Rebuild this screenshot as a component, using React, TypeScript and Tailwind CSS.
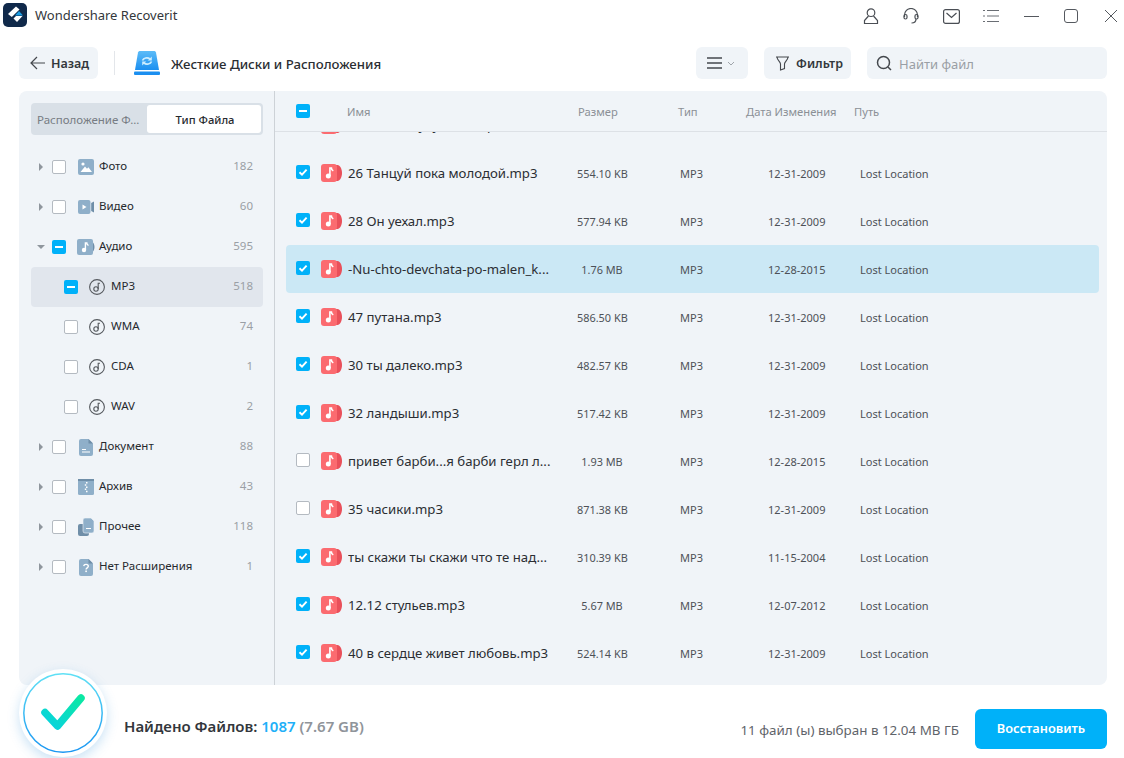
import { ReactNode } from "react";

const files = [
  { name: "25 Я не забуду тебя.mp3", size: "498.20 KB", date: "12-31-2009", on: true },
  { name: "26 Танцуй пока молодой.mp3", size: "554.10 KB", date: "12-31-2009", on: true },
  { name: "28 Он уехал.mp3", size: "577.94 KB", date: "12-31-2009", on: true },
  { name: "-Nu-chto-devchata-po-malen_k...", size: "1.76 MB", date: "12-28-2015", on: true, active: true },
  { name: "47 путана.mp3", size: "586.50 KB", date: "12-31-2009", on: true },
  { name: "30 ты далеко.mp3", size: "482.57 KB", date: "12-31-2009", on: true },
  { name: "32 ландыши.mp3", size: "517.42 KB", date: "12-31-2009", on: true },
  { name: "привет барби...я барби герл л...", size: "1.93 MB", date: "12-28-2015", on: false },
  { name: "35 часики.mp3", size: "871.38 KB", date: "12-31-2009", on: false },
  { name: "ты скажи ты скажи что те над...", size: "310.39 KB", date: "11-15-2004", on: true },
  { name: "12.12 стульев.mp3", size: "5.67 MB", date: "12-07-2012", on: true },
  { name: "40 в сердце живет любовь.mp3", size: "524.14 KB", date: "12-31-2009", on: true },
];

function Check({ state }: { state: "off" | "on" | "mixed" }) {
  if (state === "off") {
    return <div className="w-[14px] h-[14px] shrink-0 rounded-[2px] border border-[#b4bac1] bg-white" />;
  }
  return (
    <div className="w-[14px] h-[14px] shrink-0 rounded-[2px] bg-[#00b1f9] flex items-center justify-center">
      {state === "mixed" ? (
        <div className="w-[8px] h-[2px] bg-white" />
      ) : (
        <svg width="10" height="10" viewBox="0 0 10 10" fill="none">
          <path d="M1.500 5.200 4 7.600 8.600 2.600" stroke="white" strokeWidth="1.900" />
        </svg>
      )}
    </div>
  );
}

function FileNote() {
  return (
    <svg width="21" height="18" viewBox="0 0 21 18" className="shrink-0">
      <path d="M14 1h2.500c2.500 0 4.500 4 4.500 8s-2 8-4.500 8H14z" fill="#e9505a" />
      <rect width="16" height="18" rx="3" fill="#fb6b70" />
      <circle cx="7.300" cy="12" r="2.500" fill="white" />
      <path d="M8.900 12V4h1.500c0 1.700.9 2.400 1.900 2.900" fill="none" stroke="white" strokeWidth="1.600" />
    </svg>
  );
}

function Caret({ open }: { open?: boolean }) {
  return open ? (
    <div className="w-0 h-0 border-x-[4px] border-x-transparent border-t-[4px] border-t-[#8f969d]" />
  ) : (
    <div className="w-0 h-0 ml-[2px] border-y-[4px] border-y-transparent border-l-[4px] border-l-[#8f969d]" />
  );
}

function NoteCircle() {
  return (
    <svg width="16" height="16" viewBox="0 0 16 16" fill="none" stroke="#55595e" strokeWidth="1.100" className="shrink-0">
      <circle cx="8" cy="8" r="7.400" />
      <circle cx="7" cy="10" r="2.200" />
      <path d="M9.200 10V4.200h1.800" />
    </svg>
  );
}

const kindIcons: Record<string, ReactNode> = {
  photo: (
    <svg width="16" height="16" viewBox="0 0 16 16">
      <rect width="16" height="16" rx="2" fill="#8fafc9" />
      <circle cx="5" cy="5" r="1.600" fill="white" />
      <path d="M2.500 13 7 7.500l2 2.200 1.400-1.400L14 13z" fill="white" />
    </svg>
  ),
  video: (
    <svg width="16" height="14" viewBox="0 0 16 14">
      <rect width="12.500" height="14" rx="2" fill="#8fafc9" />
      <path d="M13.200 3 16 1.500v11L13.200 11z" fill="#6f8ea8" />
      <path d="M4.500 4.500 8.500 7l-4 2.500z" fill="white" />
    </svg>
  ),
  audio: (
    <svg width="18" height="16" viewBox="0 0 18 16">
      <path d="M14 1.500c2.200 1.500 3.500 3.800 3.500 6.500s-1.300 5-3.500 6.500z" fill="#6f8ea8" />
      <rect width="16" height="16" rx="2" fill="#8fafc9" />
      <circle cx="7" cy="11" r="2.200" fill="white" />
      <path d="M8.400 11V4h1.400c0 1.400.8 2 1.700 2.500" fill="none" stroke="white" strokeWidth="1.400" />
    </svg>
  ),
  doc: (
    <svg width="14" height="17" viewBox="0 0 14 17">
      <path d="M2 0h7.500L14 4.500V15a2 2 0 0 1-2 2H2a2 2 0 0 1-2-2V2a2 2 0 0 1 2-2z" fill="#8fafc9" />
      <path d="M9.500 0 14 4.500H9.500z" fill="#6f8ea8" />
      <path d="M3 10h4v1H3zM3 12.500h8v1H3z" fill="white" />
    </svg>
  ),
  zip: (
    <svg width="16" height="16" viewBox="0 0 16 16">
      <rect width="16" height="16" rx="1.500" fill="#8fafc9" />
      <rect width="16" height="2" fill="#6f8ea8" />
      <path d="M8 3h1.500v1.500H8zM6.800 5.200h1.500v1.500H6.800zM8 7.400h1.500v1.500H8zM6.800 9.600h1.500v1.500H6.800zM8 11.800h1.500v1.500H8z" fill="white" />
    </svg>
  ),
  other: (
    <svg width="16" height="18" viewBox="0 0 16 18">
      <rect x="0" y="6" width="11" height="12" rx="2" fill="#6f8ea8" />
      <path d="M7 0h6l3 3v10a2 2 0 0 1-2 2H7a2 2 0 0 1-2-2V2a2 2 0 0 1 2-2z" fill="#8fafc9" stroke="#f0f4f8" strokeWidth="0.600" />
      <path d="M8 10h5v1H8z" fill="white" />
    </svg>
  ),
  unknown: (
    <svg width="14" height="17" viewBox="0 0 14 17">
      <path d="M2 0h7.500L14 4.500V15a2 2 0 0 1-2 2H2a2 2 0 0 1-2-2V2a2 2 0 0 1 2-2z" fill="#8fafc9" />
      <path d="M9.500 0 14 4.500H9.500z" fill="#6f8ea8" />
      <path d="M4.700 7.200C4.900 5.900 5.800 5.400 7 5.400c1.300 0 2.300.7 2.300 1.900 0 1.600-2.200 1.600-2.200 3.200" fill="none" stroke="white" strokeWidth="1.400" />
      <rect x="6.300" y="11.500" width="1.600" height="1.600" fill="white" />
    </svg>
  ),
};

function KindRow({ icon, label, count, open, state = "off" }: { icon: string; label: string; count: number; open?: boolean; state?: "off" | "on" | "mixed" }) {
  return (
    <div className="h-[40px] flex items-center pr-[10px]">
      <div className="w-[21px] pl-[6px]">
        <Caret open={open} />
      </div>
      <Check state={state} />
      <div className="w-[18px] ml-[11px] flex justify-center shrink-0">{kindIcons[icon]}</div>
      <span className="ml-[4px] mb-[2px] text-[11.500px] text-[#26292e]">{label}</span>
      <span className="ml-auto mb-[2px] text-[11.500px] text-[#9a9fa5]">{count}</span>
    </div>
  );
}

function SubRow({ label, count, state = "off", active }: { label: string; count: number; state?: "off" | "on" | "mixed"; active?: boolean }) {
  return (
    <div className={"h-[40px] flex items-center pl-[33px] pr-[10px] rounded-[4px] " + (active ? "bg-[#e1e6ed]" : "")}>
      <Check state={state} />
      <div className="ml-[11px]">
        <NoteCircle />
      </div>
      <span className="ml-[6px] mb-[2px] text-[11.500px] text-[#26292e]">{label}</span>
      <span className="ml-auto mb-[2px] text-[11.500px] text-[#9a9fa5]">{count}</span>
    </div>
  );
}

function FileRow({ file }: { file: (typeof files)[number] }) {
  return (
    <div className={"h-[48px] shrink-0 ml-[11px] w-[813px] flex items-center pl-[10px] rounded-[4px] " + (file.active ? "bg-[#cbe8f5]" : "")}>
      <div className="mb-[2px]">
        <Check state={file.on ? "on" : "off"} />
      </div>
      <div className="ml-[11px] mr-[6px]">
        <FileNote />
      </div>
      <span className="w-[229px] shrink-0 mt-[2px] text-[13.200px] text-[#2b2e33] whitespace-nowrap overflow-hidden">{file.name}</span>
      <div className="w-[103px] shrink-0 mt-[2px]">
        <div className="w-[50px] text-center text-[10.900px] text-[#4d5157] whitespace-nowrap">{file.size}</div>
      </div>
      <span className="w-[88px] shrink-0 mt-[2px] text-[11px] text-[#4d5157]">MP3</span>
      <span className="w-[92px] shrink-0 mt-[2px] text-[11px] text-[#4d5157]">{file.date}</span>
      <span className="mt-[2px] text-[11px] text-[#4d5157]">Lost Location</span>
    </div>
  );
}

const topIcon = "w-[40px] h-[32px] flex items-center justify-center shrink-0";

export default function App() {
  return (
    <div className="relative w-[1124px] h-[758px] overflow-hidden bg-white flex flex-col font-['Noto_Sans',sans-serif]">
      {/* title bar */}
      <div className="h-[32px] flex items-center shrink-0 -mt-[1px]">
        <svg width="24" height="24" viewBox="0 0 24 24" className="ml-[3px] shrink-0">
          <rect width="24" height="24" rx="5" fill="#10294a" />
          <path d="M13 3.500 16.500 6.500 8.800 14 5 11z" fill="white" />
          <path d="M10.500 15.500 13 13l6.500 0-5.500 6z" fill="white" />
          <path d="M16 8 20 12.500H12z" fill="#1a9de3" />
        </svg>
        <span className="ml-[8px] mt-[2px] text-[13px] text-[#33373c]">Wondershare Recoverit</span>
        <div className="ml-auto flex -mr-[7px] mt-[2px]">
          <div className={topIcon}>
            <svg width="16" height="16" viewBox="0 0 16 16" fill="none" stroke="#4a4e54" strokeWidth="1.200">
              <circle cx="8" cy="4.700" r="3.800" />
              <path d="M5.500 8 1.500 12.500V15.500h13V12.500L10.500 8" />
            </svg>
          </div>
          <div className={topIcon}>
            <svg width="16" height="16" viewBox="0 0 16 16" fill="none" stroke="#4a4e54" strokeWidth="1.200">
              <path d="M1.500 9V7a6.500 6.500 0 0 1 13 0v2" />
              <rect x="1" y="6.500" width="3" height="4.500" rx="1.500" />
              <rect x="12" y="6.500" width="3" height="4.500" rx="1.500" />
              <path d="M13 11c0 2.500-2 4-4.500 4" />
            </svg>
          </div>
          <div className={topIcon}>
            <svg width="17" height="15" viewBox="0 0 17 15" fill="none" stroke="#4a4e54" strokeWidth="1.200">
              <rect x="0.600" y="0.600" width="15.800" height="13.800" rx="2" />
              <path d="M3.500 4 8.500 8.500 13.500 4" />
            </svg>
          </div>
          <div className={topIcon}>
            <svg width="16" height="14" viewBox="0 0 16 14" stroke="#6a6e74" strokeWidth="1">
              <path d="M0 1.500h2M4 1.500h12M0 7h2M4 7h12M0 12.500h2M4 12.500h12" />
            </svg>
          </div>
          <div className={topIcon}>
            <div className="w-[15px] h-[1px] bg-[#55595f]" />
          </div>
          <div className={topIcon}>
            <div className="w-[14px] h-[14px] rounded-[3px] border border-[#55595f]" />
          </div>
          <div className={topIcon}>
            <svg width="14" height="14" viewBox="0 0 14 14" stroke="#55595f" strokeWidth="1">
              <path d="M1 1l12 12M13 1 1 13" />
            </svg>
          </div>
        </div>
      </div>

      {/* toolbar */}
      <div className="h-[32px] mt-[16px] mx-[19px] w-[1088px] flex items-center shrink-0">
        <div className="w-[79px] h-[32px] rounded-[6px] bg-[#f0f4f8] flex items-center pl-[11px]">
          <svg width="15" height="14" viewBox="0 0 15 14" fill="none" stroke="#44484d" strokeWidth="1.200">
            <path d="M15 7H1M7 1 1 7l6 6" />
          </svg>
          <span className="ml-[6px] mt-[3px] text-[12.500px] font-semibold text-[#33373c]">Назад</span>
        </div>
        <div className="w-px h-[24px] bg-[#e3e6ea] ml-[16px]" />
        <svg width="26" height="25" viewBox="0 0 26 25" className="ml-[19px] shrink-0">
          <defs>
            <linearGradient id="disk" x1="0" y1="0" x2="0" y2="1">
              <stop offset="0" stopColor="#5cbcf8" />
              <stop offset="1" stopColor="#1b8ff0" />
            </linearGradient>
          </defs>
          <path d="M6 0h14c1 0 1.700.5 2 1.500L25 19H1L4 1.500C4.300.5 5 0 6 0z" fill="url(#disk)" />
          <rect x="0" y="20.500" width="26" height="3.500" rx="1" fill="#1b8ff0" />
          <path d="M8.500 9.500C9.500 6.800 13.500 6 16 8M17.500 10.500C16.500 13.200 12.500 14 10 12" fill="none" stroke="#cdeeff" strokeWidth="1.700" />
          <path d="M17.800 5.500V9.500H13.800zM8.200 14.500V10.500H12.200z" fill="#cdeeff" />
        </svg>
        <span className="ml-[11px] mt-[3px] text-[13.200px] font-medium text-[#2b2e33]">Жесткие Диски и Расположения</span>
        <div className="ml-auto w-[52px] h-[32px] rounded-[6px] bg-[#f0f4f8] flex items-center pl-[11px]">
          <svg width="15" height="12" viewBox="0 0 15 12" stroke="#44484d" strokeWidth="1.300">
            <path d="M0 1h15M0 6h15M0 11h15" />
          </svg>
          <svg width="8" height="5" viewBox="0 0 8 5" fill="none" stroke="#a0a5ab" className="ml-[5px]">
            <path d="M1 1l3 3 3-3" />
          </svg>
        </div>
        <div className="ml-[16px] w-[87px] h-[32px] rounded-[6px] bg-[#f0f4f8] flex items-center pl-[11px]">
          <svg width="15" height="15" viewBox="0 0 15 15" fill="none" stroke="#44484d" strokeWidth="1.100">
            <path d="M1 1h13M2 1c0 3 3.500 5 3.500 7v6l4-1.500V8C9.500 6 13 4 13 1" />
          </svg>
          <span className="ml-[6px] mt-[3px] text-[12.500px] font-semibold text-[#33373c]">Фильтр</span>
        </div>
        <div className="ml-[16px] w-[240px] h-[32px] rounded-[6px] bg-[#f0f4f8] flex items-center pl-[9px]">
          <svg width="16" height="16" viewBox="0 0 16 16" fill="none" stroke="#44484d" strokeWidth="1.500">
            <circle cx="7.500" cy="7.500" r="6" />
            <path d="M12 12l3 3" />
          </svg>
          <span className="ml-[7px] mt-[3px] text-[13px] text-[#9a9fa5]">Найти файл</span>
        </div>
      </div>

      {/* main panel */}
      <div className="mt-[12px] mx-[19px] w-[1088px] h-[594px] rounded-[8px] bg-[#f0f4f8] flex overflow-hidden shrink-0">
        <div className="w-[255px] shrink-0 border-r border-[#cdd2d7] box-content">
          <div className="mx-[12px] mt-[12px] w-[232px] h-[32px] rounded-[4px] bg-[#d9e0e7] flex items-center pl-[6px] pr-[2px]">
            <span className="w-[110px] mt-[2px] text-[11.500px] text-[#777c83] whitespace-nowrap">Расположение Ф...</span>
            <div className="w-[114px] h-[28px] pt-[2px] pl-[2px] rounded-[3px] bg-white flex items-center justify-center text-[11.200px] font-medium text-[#26292e]">
              Тип Файла
            </div>
          </div>
          <div className="mx-[12px] mt-[12px] w-[232px]">
            <KindRow icon="photo" label="Фото" count={182} />
            <KindRow icon="video" label="Видео" count={60} />
            <KindRow icon="audio" label="Аудио" count={595} open state="mixed" />
            <SubRow label="MP3" count={518} state="mixed" active />
            <SubRow label="WMA" count={74} />
            <SubRow label="CDA" count={1} />
            <SubRow label="WAV" count={2} />
            <KindRow icon="doc" label="Документ" count={88} />
            <KindRow icon="zip" label="Архив" count={43} />
            <KindRow icon="other" label="Прочее" count={118} />
            <KindRow icon="unknown" label="Нет Расширения" count={1} />
          </div>
        </div>

        <div className="flex-1 min-w-0 flex flex-col">
          <div className="h-[41px] shrink-0 flex items-center pl-[21px] border-b border-[#dde1e6] text-[11.200px] text-[#8b9096]">
            <Check state="mixed" />
            <span className="ml-[37px] w-[231px] mt-[2px]">Имя</span>
            <span className="w-[100px] mt-[2px]">Размер</span>
            <span className="w-[68px] mt-[2px]">Тип</span>
            <span className="w-[108px] mt-[2px] whitespace-nowrap">Дата Изменения</span>
            <span className="mt-[2px]">Путь</span>
          </div>
          <div className="flex-1 min-h-0 overflow-hidden flex flex-col">
            <div className="-mt-[31px] flex flex-col">
              {files.map((f) => (
                <FileRow key={f.name} file={f} />
              ))}
            </div>
          </div>
        </div>
      </div>

      {/* footer */}
      <div className="flex-1 min-h-0 flex items-center mx-[19px] w-[1088px] pl-[105px]">
        <div className="mt-[10px] text-[15px] font-semibold text-[#33373c] whitespace-nowrap">
          Найдено Файлов: <span className="text-[#1fb0f8]">1087</span> <span className="text-[#8f949a]">(7.67 GB)</span>
        </div>
        <span className="ml-auto text-[13.400px] text-[#5f646a] mt-[18px] whitespace-nowrap">11 файл (ы) выбран в 12.04 MB ГБ</span>
        <div className="ml-[16px] mt-[15px] w-[132px] h-[40px] rounded-[6px] bg-[#00b1f9] flex items-center justify-center text-[12.800px] font-semibold text-white">
          Восстановить
        </div>
      </div>

      {/* status badge overlaps the panel */}
      <div className="absolute left-[19px] top-[669px] w-[88px] h-[88px] rounded-full bg-white shadow-[0_4px_12px_rgba(60,150,220,0.28)] flex items-center justify-center">
        <svg width="80" height="80" viewBox="0 0 80 80" fill="none">
          <defs>
            <linearGradient id="ring" x1="0.500" y1="0" x2="0.500" y2="1">
              <stop offset="0" stopColor="#5fe0f5" />
              <stop offset="1" stopColor="#1a96f2" />
            </linearGradient>
            <linearGradient id="tick" x1="1" y1="0" x2="0" y2="1">
              <stop offset="0" stopColor="#0be8a4" />
              <stop offset="1" stopColor="#08d2e0" />
            </linearGradient>
          </defs>
          <circle cx="40" cy="40" r="39.200" stroke="url(#ring)" strokeWidth="1.500" />
          <path d="M22 39.500 34.500 53 58 25" stroke="url(#tick)" strokeWidth="7.500" strokeLinecap="round" strokeLinejoin="round" />
        </svg>
      </div>
    </div>
  );
}
